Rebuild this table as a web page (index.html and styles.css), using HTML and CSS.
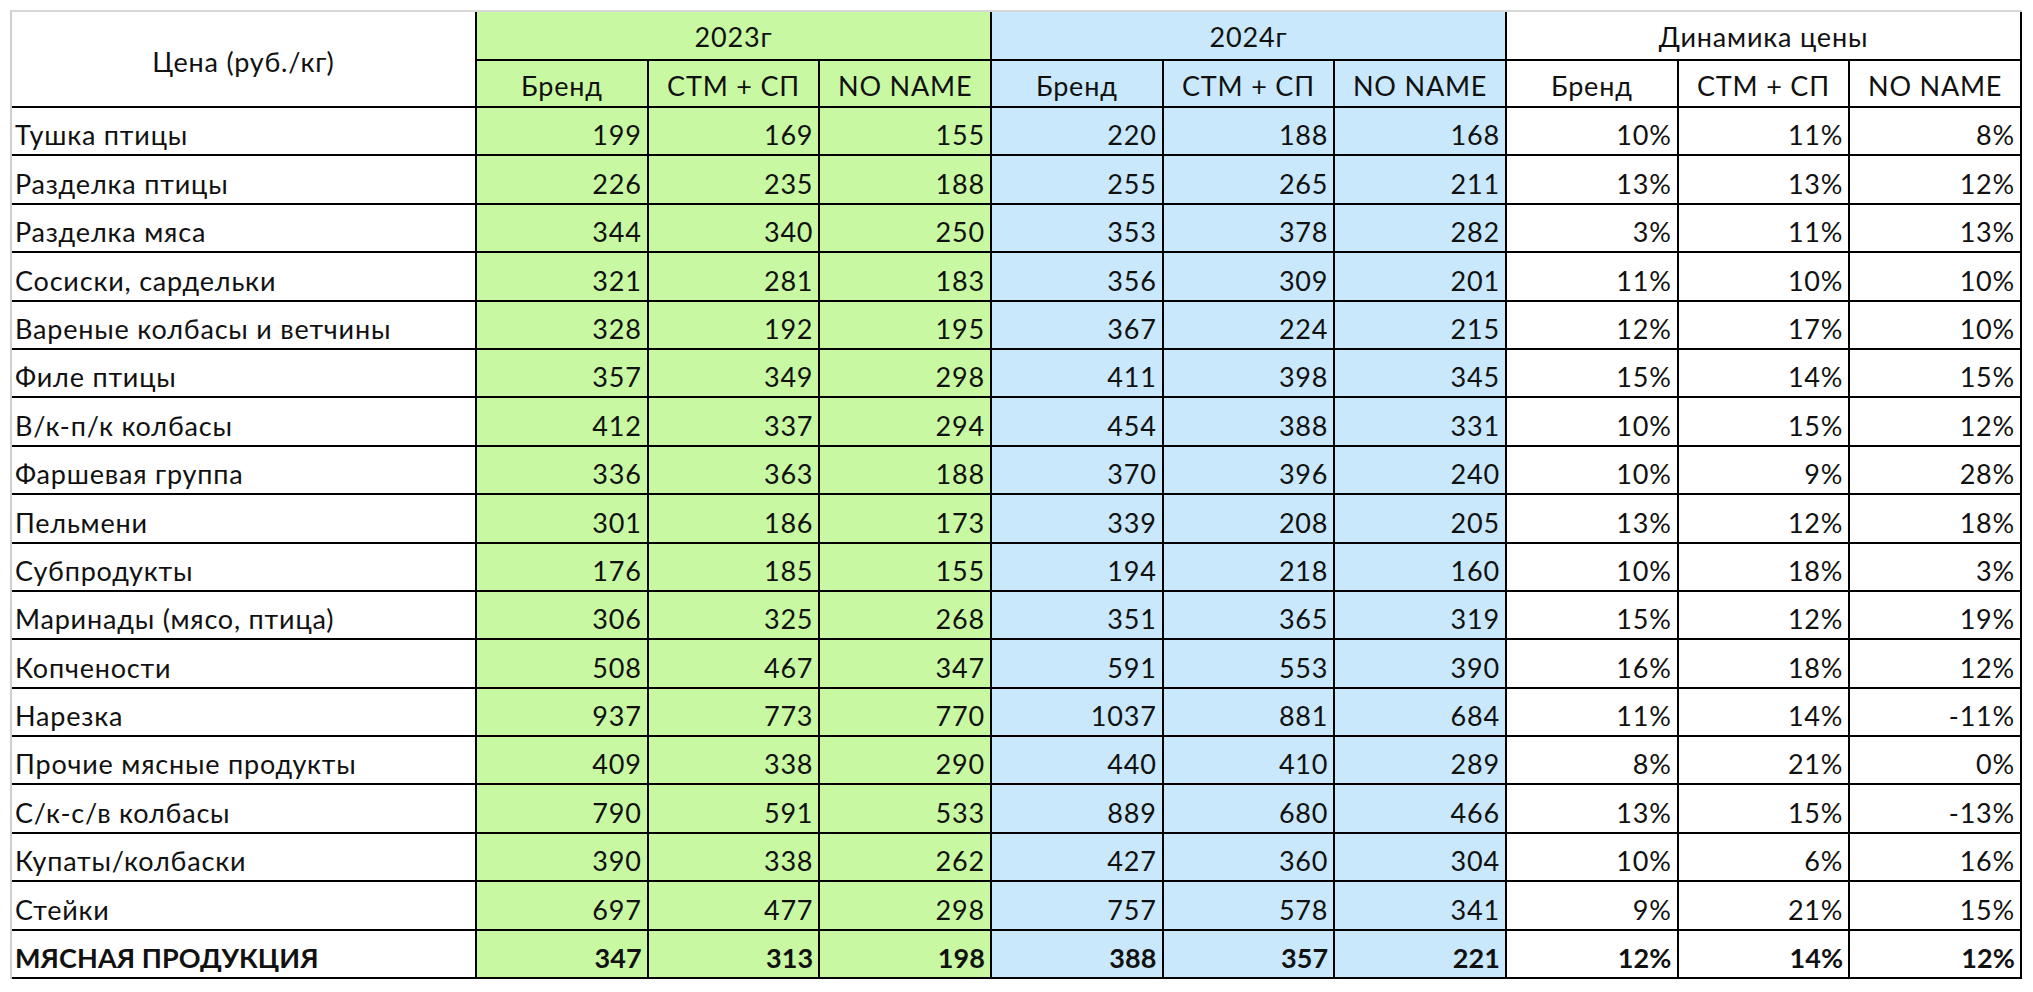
FILE: index.html
```html
<!DOCTYPE html>
<html lang="ru">
<head>
<meta charset="utf-8">
<title>Цена (руб./кг)</title>
<link rel="stylesheet" href="styles.css">
</head>
<body>
<table class="price-table">
  <colgroup>
    <col class="col-name">
    <col><col><col><col><col><col><col><col><col>
  </colgroup>
  <thead>
    <tr class="head-top">
      <th rowspan="2" class="h-name">Цена (руб./кг)</th>
      <th colspan="3" class="y23">2023г</th>
      <th colspan="3" class="y24">2024г</th>
      <th colspan="3" class="dyn">Динамика цены</th>
    </tr>
    <tr class="head-sub">
      <th class="y23">Бренд</th><th class="y23">СТМ + СП</th><th class="y23">NO NAME</th>
      <th class="y24">Бренд</th><th class="y24">СТМ + СП</th><th class="y24">NO NAME</th>
      <th class="dyn">Бренд</th><th class="dyn">СТМ + СП</th><th class="dyn">NO NAME</th>
    </tr>
  </thead>
  <tbody>
    <tr><td>Тушка птицы</td><td class="y23">199</td><td class="y23">169</td><td class="y23">155</td><td class="y24">220</td><td class="y24">188</td><td class="y24">168</td><td>10%</td><td>11%</td><td>8%</td></tr>
    <tr><td>Разделка птицы</td><td class="y23">226</td><td class="y23">235</td><td class="y23">188</td><td class="y24">255</td><td class="y24">265</td><td class="y24">211</td><td>13%</td><td>13%</td><td>12%</td></tr>
    <tr><td>Разделка мяса</td><td class="y23">344</td><td class="y23">340</td><td class="y23">250</td><td class="y24">353</td><td class="y24">378</td><td class="y24">282</td><td>3%</td><td>11%</td><td>13%</td></tr>
    <tr><td>Сосиски, сардельки</td><td class="y23">321</td><td class="y23">281</td><td class="y23">183</td><td class="y24">356</td><td class="y24">309</td><td class="y24">201</td><td>11%</td><td>10%</td><td>10%</td></tr>
    <tr><td>Вареные колбасы и ветчины</td><td class="y23">328</td><td class="y23">192</td><td class="y23">195</td><td class="y24">367</td><td class="y24">224</td><td class="y24">215</td><td>12%</td><td>17%</td><td>10%</td></tr>
    <tr><td>Филе птицы</td><td class="y23">357</td><td class="y23">349</td><td class="y23">298</td><td class="y24">411</td><td class="y24">398</td><td class="y24">345</td><td>15%</td><td>14%</td><td>15%</td></tr>
    <tr><td>В/к-п/к колбасы</td><td class="y23">412</td><td class="y23">337</td><td class="y23">294</td><td class="y24">454</td><td class="y24">388</td><td class="y24">331</td><td>10%</td><td>15%</td><td>12%</td></tr>
    <tr><td>Фаршевая группа</td><td class="y23">336</td><td class="y23">363</td><td class="y23">188</td><td class="y24">370</td><td class="y24">396</td><td class="y24">240</td><td>10%</td><td>9%</td><td>28%</td></tr>
    <tr><td>Пельмени</td><td class="y23">301</td><td class="y23">186</td><td class="y23">173</td><td class="y24">339</td><td class="y24">208</td><td class="y24">205</td><td>13%</td><td>12%</td><td>18%</td></tr>
    <tr><td>Субпродукты</td><td class="y23">176</td><td class="y23">185</td><td class="y23">155</td><td class="y24">194</td><td class="y24">218</td><td class="y24">160</td><td>10%</td><td>18%</td><td>3%</td></tr>
    <tr><td>Маринады (мясо, птица)</td><td class="y23">306</td><td class="y23">325</td><td class="y23">268</td><td class="y24">351</td><td class="y24">365</td><td class="y24">319</td><td>15%</td><td>12%</td><td>19%</td></tr>
    <tr><td>Копчености</td><td class="y23">508</td><td class="y23">467</td><td class="y23">347</td><td class="y24">591</td><td class="y24">553</td><td class="y24">390</td><td>16%</td><td>18%</td><td>12%</td></tr>
    <tr><td>Нарезка</td><td class="y23">937</td><td class="y23">773</td><td class="y23">770</td><td class="y24">1037</td><td class="y24">881</td><td class="y24">684</td><td>11%</td><td>14%</td><td>-11%</td></tr>
    <tr><td>Прочие мясные продукты</td><td class="y23">409</td><td class="y23">338</td><td class="y23">290</td><td class="y24">440</td><td class="y24">410</td><td class="y24">289</td><td>8%</td><td>21%</td><td>0%</td></tr>
    <tr><td>С/к-с/в колбасы</td><td class="y23">790</td><td class="y23">591</td><td class="y23">533</td><td class="y24">889</td><td class="y24">680</td><td class="y24">466</td><td>13%</td><td>15%</td><td>-13%</td></tr>
    <tr><td>Купаты/колбаски</td><td class="y23">390</td><td class="y23">338</td><td class="y23">262</td><td class="y24">427</td><td class="y24">360</td><td class="y24">304</td><td>10%</td><td>6%</td><td>16%</td></tr>
    <tr><td>Стейки</td><td class="y23">697</td><td class="y23">477</td><td class="y23">298</td><td class="y24">757</td><td class="y24">578</td><td class="y24">341</td><td>9%</td><td>21%</td><td>15%</td></tr>
    <tr class="total"><td>МЯСНАЯ ПРОДУКЦИЯ</td><td class="y23">347</td><td class="y23">313</td><td class="y23">198</td><td class="y24">388</td><td class="y24">357</td><td class="y24">221</td><td>12%</td><td>14%</td><td>12%</td></tr>
  </tbody>
</table>
</body>
</html>
```

FILE: styles.css
```css
* { box-sizing: border-box; }

html, body {
  margin: 0;
  padding: 0;
  background: #ffffff;
}

body {
  padding: 10px 0 0 10px;
  font-family: Lato, "Open Sans", sans-serif;
  font-size: 27px;
  letter-spacing: 0.8px;
  color: #111111;
}

.price-table {
  table-layout: fixed;
  width: 2012px;
  border-collapse: separate;
  border-spacing: 0;
  border-top: 2px solid #d8d8d8;
  border-left: 2px solid #cfcfcf;
}

.col-name { width: 465px; }

.price-table th,
.price-table td {
  border-right: 2px solid #000;
  border-bottom: 2px solid #000;
  line-height: 30px;
  padding: 0 5px 4px 5px;
  vertical-align: bottom;
  white-space: nowrap;
  overflow: hidden;
}

.price-table th {
  font-weight: normal;
  text-align: center;
}

.price-table td {
  text-align: right;
  height: 48.4px;
}

.price-table td:first-child {
  text-align: left;
  padding-left: 3px;
}

.head-top th { height: 49px; padding-bottom: 7px; }
.head-sub th { height: 47px; padding-bottom: 5px; }

.price-table th.h-name {
  vertical-align: middle;
  padding: 6px 0 0 0;
}

.y23 { background: #c9f8a2; }
.y24 { background: #c9e8fb; }

.total td {
  font-weight: bold;
  letter-spacing: 0.1px;
}
```
